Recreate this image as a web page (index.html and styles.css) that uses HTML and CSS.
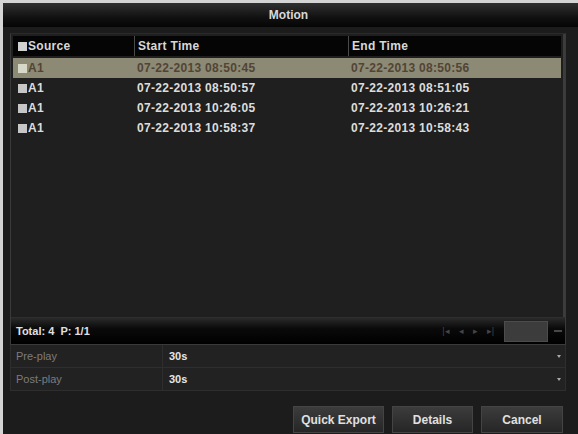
FILE: index.html
```html
<!DOCTYPE html>
<html>
<head>
<meta charset="utf-8">
<link rel="stylesheet" href="styles.css">
</head>
<body>
<div class="window">
  <div class="titlebar">Motion</div>
  <div class="panel">
    <div class="table">
      <div class="row head">
        <div class="cell c1"><span class="chk"></span>Source</div>
        <div class="cell c2">Start Time</div>
        <div class="cell c3">End Time</div>
      </div>
      <div class="row sel">
        <div class="cell c1"><span class="chk"></span>A1</div>
        <div class="cell c2">07-22-2013 08:50:45</div>
        <div class="cell c3">07-22-2013 08:50:56</div>
      </div>
      <div class="row">
        <div class="cell c1"><span class="chk"></span>A1</div>
        <div class="cell c2">07-22-2013 08:50:57</div>
        <div class="cell c3">07-22-2013 08:51:05</div>
      </div>
      <div class="row">
        <div class="cell c1"><span class="chk"></span>A1</div>
        <div class="cell c2">07-22-2013 10:26:05</div>
        <div class="cell c3">07-22-2013 10:26:21</div>
      </div>
      <div class="row">
        <div class="cell c1"><span class="chk"></span>A1</div>
        <div class="cell c2">07-22-2013 10:58:37</div>
        <div class="cell c3">07-22-2013 10:58:43</div>
      </div>
    </div>
    <div class="footer">
      <span class="total">Total: 4&nbsp;&nbsp;P: 1/1</span>
      <div class="pager">
        <span class="pg">|◂</span><span class="pg">◂</span><span class="pg">▸</span><span class="pg">▸|</span>
        <span class="pgbox"></span>
        <span class="pgdash"></span>
      </div>
    </div>
  </div>
  <div class="settings">
    <div class="srow">
      <div class="slabel">Pre-play</div>
      <div class="svalue"><span>30s</span><span class="arrow"></span></div>
    </div>
    <div class="srow">
      <div class="slabel">Post-play</div>
      <div class="svalue"><span>30s</span><span class="arrow"></span></div>
    </div>
  </div>
  <div class="buttons">
    <div class="btn b1">Quick Export</div>
    <div class="btn b2">Details</div>
    <div class="btn b3">Cancel</div>
  </div>
</div>
</body>
</html>
```
FILE: styles.css
```css
html, body {
  margin: 0;
  padding: 0;
}
body {
  width: 578px;
  height: 434px;
  background: #d4d4d4;
  overflow: hidden;
  font-family: "Liberation Sans", Arial, sans-serif;
}
.window {
  margin: 3px 0 0 3px;
  width: 575px;
  height: 431px;
  background: #1c1c1c;
  display: flex;
  flex-direction: column;
}
.titlebar {
  height: 24px;
  line-height: 24px;
  text-align: center;
  color: #d8d8d8;
  font-weight: bold;
  font-size: 12px;
  background: linear-gradient(#303030, #111 60%, #050505);
  padding-right: 4px;
}
.panel {
  margin: 6px 12px 0 7px;
  border: 1px solid #3a3a3a;
  border-top-color: #2a2a2a;
  height: 310px;
  display: flex;
  flex-direction: column;
  background: #1f1f1f;
}
.table {
  flex: 1;
  padding: 2px 2px 0 2px;
  border-right: 2px solid #3c3c3c;
}
.row {
  display: flex;
  height: 20px;
  align-items: center;
  font-size: 12px;
  font-weight: bold;
  color: #dcdcdc;
  letter-spacing: 0.3px;
}
.row.head {
  background: #050505;
  color: #d8d8d8;
  margin-bottom: 2px;
}
.row.sel {
  background: #8c8a74;
  color: #524434;
}
.cell {
  height: 100%;
  display: flex;
  align-items: center;
  white-space: nowrap;
}
.c1 { width: 121px; padding-left: 5px; box-sizing: border-box; }
.c2 { width: 214px; padding-left: 3px; box-sizing: border-box; }
.c3 { flex: 1; padding-left: 3px; box-sizing: border-box; }
.head .c2, .head .c3 {
  border-left: 1px solid #4a4a4a;
}
.chk {
  display: inline-block;
  width: 9px;
  height: 9px;
  background: #c6c6c6;
  margin-right: 1px;
}
.head .chk { background: #d0d0d0; }
.sel .chk { background: #d8d8c8; }
.footer {
  height: 26px;
  background: linear-gradient(#2a2a2a, #0a0a0a 40%, #000);
  display: flex;
  align-items: center;
  justify-content: space-between;
  padding: 0 3px 0 5px;
  border-top: 1px solid #2e2e2e;
}
.total {
  color: #e0e0e0;
  font-size: 11px;
  font-weight: bold;
}
.pager {
  display: flex;
  align-items: center;
  gap: 9px;
}
.pg {
  color: #454545;
  font-size: 9px;
}
.pgbox {
  width: 42px;
  height: 19px;
  background: #3c3c3c;
  border: 1px solid #4c4c4c;
  margin-left: 1px;
}
.pgdash {
  width: 8px;
  height: 2px;
  background: #484848;
  margin-left: -3px;
}
.settings {
  margin: 0 12px 0 7px;
  display: flex;
  flex-direction: column;
}
.srow {
  display: flex;
  height: 22px;
  border: 1px solid #2e2e2e;
  border-top: none;
  background: #222;
}
.slabel {
  width: 146px;
  padding-left: 5px;
  color: #7c7c7c;
  font-size: 11px;
  display: flex;
  align-items: center;
  border-right: 1px solid #2e2e2e;
}
.svalue {
  flex: 1;
  display: flex;
  align-items: center;
  justify-content: space-between;
  padding: 0 4px 0 6px;
  color: #e6e6e6;
  font-size: 11px;
  font-weight: bold;
}
.arrow {
  width: 0;
  height: 0;
  border-left: 2px solid transparent;
  border-right: 2px solid transparent;
  border-top: 3px solid #aaa;
}
.buttons {
  display: flex;
  justify-content: flex-end;
  gap: 8px;
  margin: 15px 15px 0 0;
}
.btn {
  height: 27px;
  line-height: 27px;
  text-align: center;
  color: #e0e0e0;
  font-size: 12px;
  font-weight: bold;
  background: linear-gradient(#3c3c3c, #262626);
  border: 1px solid #444;
  box-sizing: border-box;
}
.b1 { width: 91px; }
.b2 { width: 81px; }
.b3 { width: 82px; }
```
